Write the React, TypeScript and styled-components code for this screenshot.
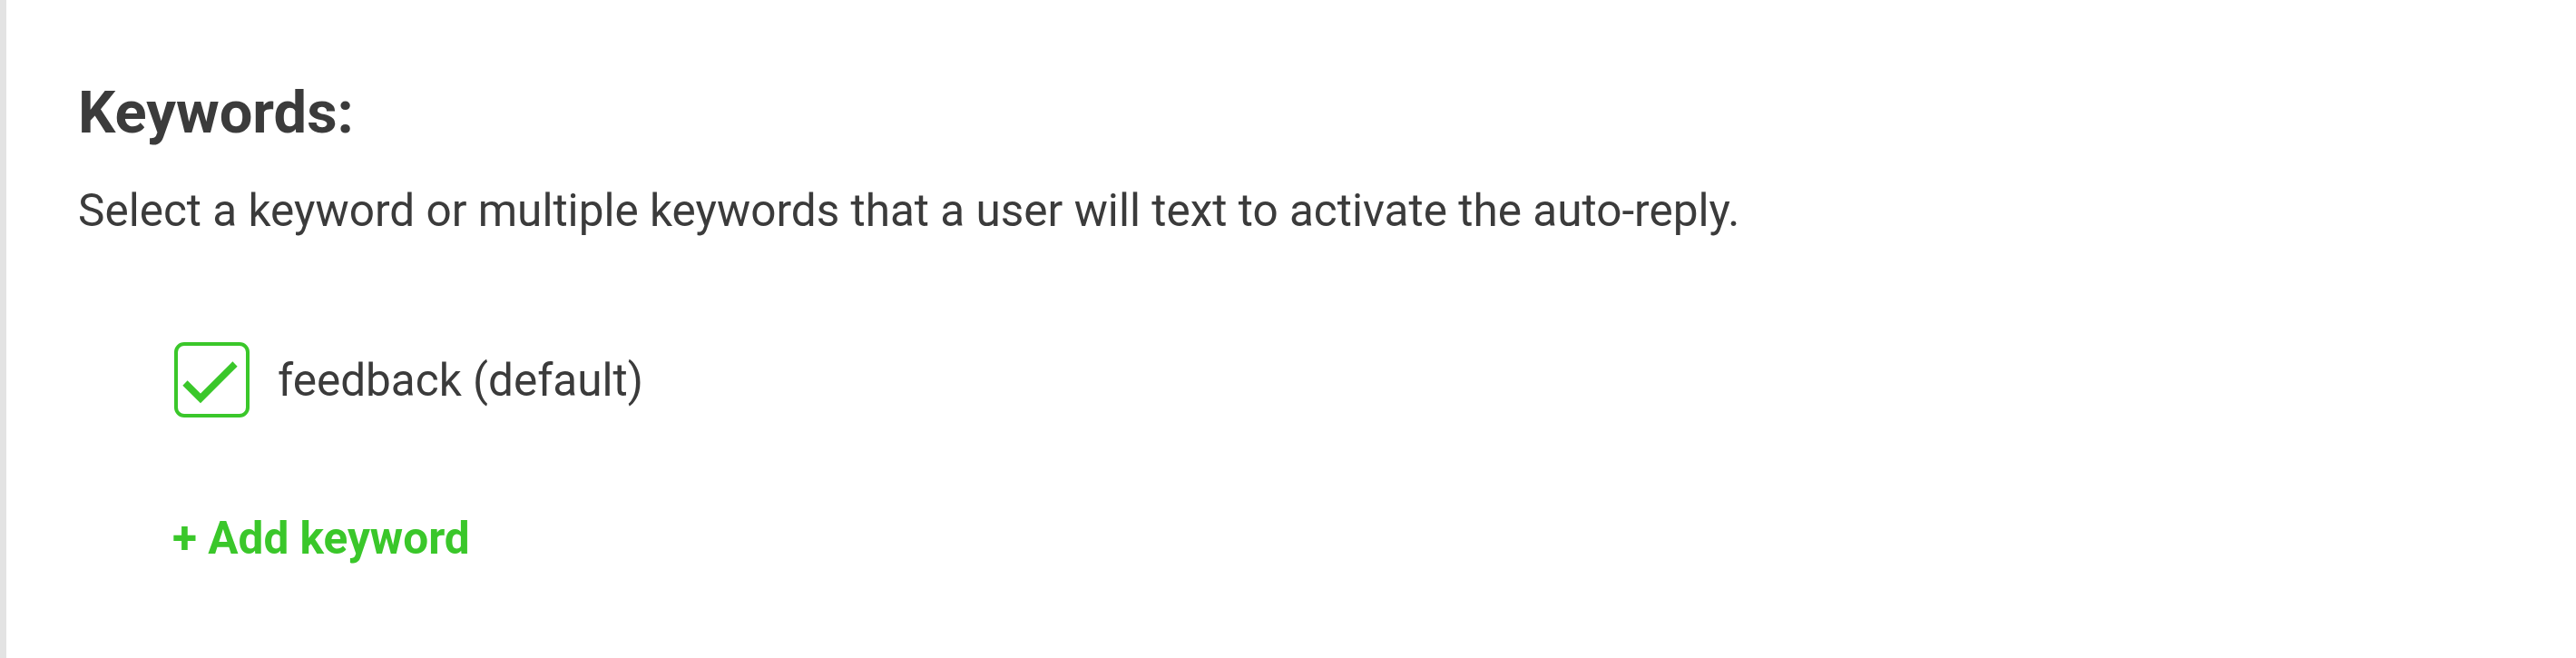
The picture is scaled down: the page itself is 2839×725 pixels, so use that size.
import React from "react";
import styled, { createGlobalStyle } from "styled-components";

const GlobalStyle = createGlobalStyle`
  html, body {
    margin: 0;
    padding: 0;
    background: #ffffff;
  }
  body {
    font-family: Roboto, "Liberation Sans", Arial, sans-serif;
    color: #3b3b3b;
  }
`;

const Page = styled.div`
  display: flex;
  height: 725px;
  overflow: hidden;
  background: #ffffff;
`;

const SideRule = styled.div`
  width: 7px;
  flex: 0 0 7px;
  background: #e3e3e3;
`;

const Section = styled.section`
  display: flex;
  flex-direction: column;
  padding: 86px 0 0 79px;
`;

const Heading = styled.h2`
  margin: 0;
  font-size: 65px;
  line-height: 76px;
  font-weight: 700;
  color: #3b3b3b;
`;

const Description = styled.p`
  margin: 41px 0 0;
  font-size: 49.5px;
  line-height: 58px;
  font-weight: 400;
  color: #3b3b3b;
`;

const OptionRow = styled.label`
  display: flex;
  align-items: center;
  gap: 31px;
  margin: 116px 0 0 106px;
  cursor: pointer;
`;

const Box = styled.span<{ $checked: boolean }>`
  box-sizing: border-box;
  width: 83px;
  height: 83px;
  flex: 0 0 83px;
  border: 4px solid #3ac72a;
  border-radius: 11px;
  display: flex;
  align-items: center;
  justify-content: center;
  background: #ffffff;
  svg {
    display: ${(p) => (p.$checked ? "block" : "none")};
  }
`;

const OptionText = styled.span`
  font-size: 49.5px;
  line-height: 58px;
  color: #3b3b3b;
`;

const AddLink = styled.a`
  margin: 104px 0 0 104px;
  font-size: 49.5px;
  line-height: 58px;
  font-weight: 700;
  color: #3ac72a;
  text-decoration: none;
  cursor: pointer;
  align-self: flex-start;
`;

const Check = () => (
  <svg width="75" height="75" viewBox="4 4 75 75" fill="none">
    <path
      d="M12 45 L29 62 L67 24"
      stroke="#3ac72a"
      strokeWidth="7.5"
      strokeLinecap="butt"
      strokeLinejoin="miter"
    />
  </svg>
);

export default function App() {
  return (
    <>
      <GlobalStyle />
      <Page>
        <SideRule />
        <Section>
          <Heading>Keywords:</Heading>
          <Description>
            Select a keyword or multiple keywords that a user will text to activate the auto-reply.
          </Description>
          <OptionRow>
            <Box $checked>
              <Check />
            </Box>
            <OptionText>feedback (default)</OptionText>
          </OptionRow>
          <AddLink>+ Add keyword</AddLink>
        </Section>
      </Page>
    </>
  );
}
